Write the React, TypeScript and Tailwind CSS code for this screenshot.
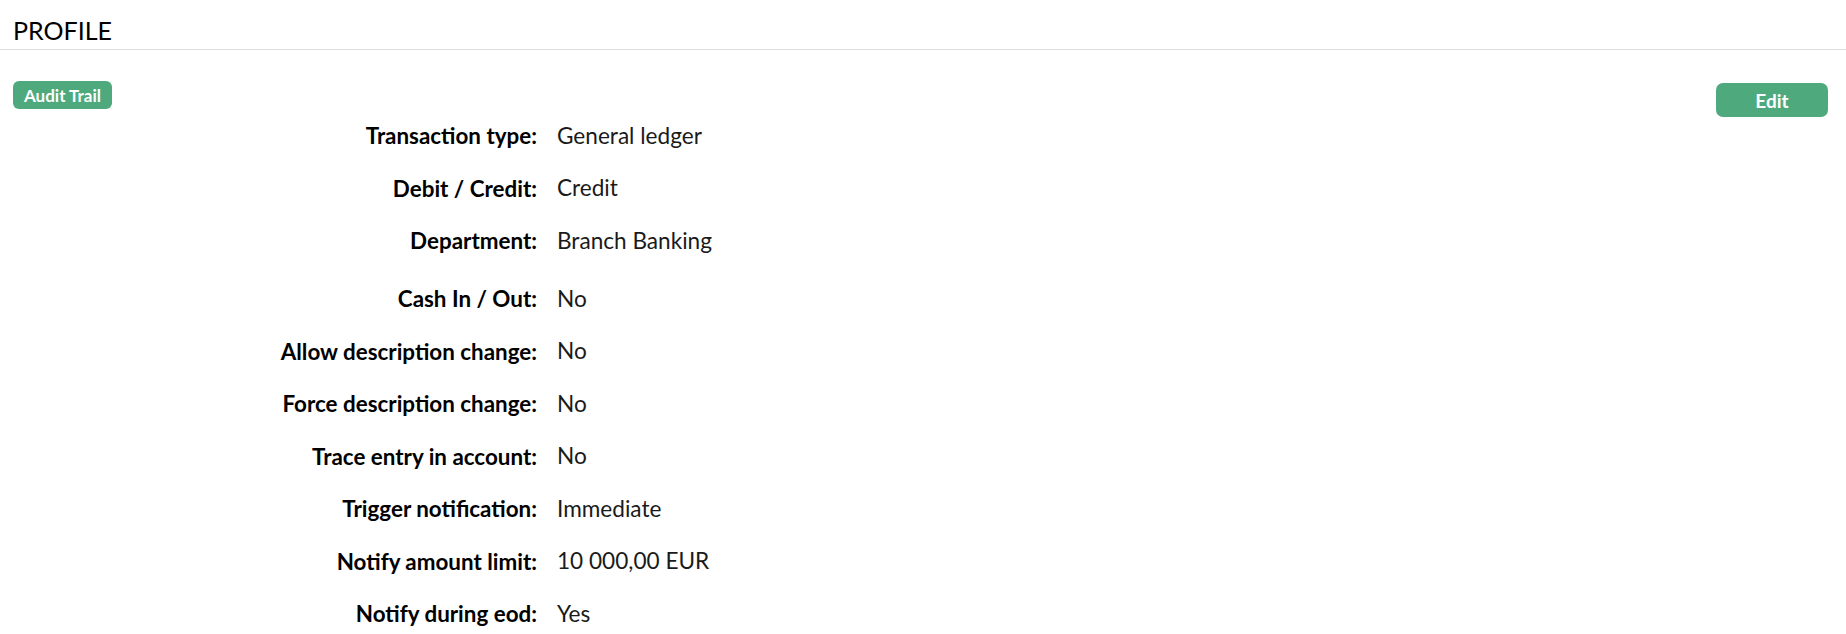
import React from 'react'

const rows: { label: string; value: string; extra?: boolean }[] = [
  { label: 'Transaction type:', value: 'General ledger' },
  { label: 'Debit / Credit:', value: 'Credit' },
  { label: 'Department:', value: 'Branch Banking', extra: true },
  { label: 'Cash In / Out:', value: 'No' },
  { label: 'Allow description change:', value: 'No' },
  { label: 'Force description change:', value: 'No' },
  { label: 'Trace entry in account:', value: 'No' },
  { label: 'Trigger notification:', value: 'Immediate' },
  { label: 'Notify amount limit:', value: '10 000,00 EUR' },
  { label: 'Notify during eod:', value: 'Yes' },
]

export default function App() {
  return (
    <div className="min-h-screen bg-white text-[#111] font-['Lato',_'Noto_Sans',_sans-serif]">
      {/* ── Header ── */}
      <div className="h-[50px] border-b border-[#dcdcdc] flex items-end pl-[13px] pb-[6px]">
        <h1 className="text-[25px] font-normal leading-none text-black">PROFILE</h1>
      </div>

      {/* ── Actions ── */}
      <div className="flex justify-between items-start h-[28px] mt-[31px] pl-[13px] pr-[18px]">
        <button className="h-[28px] rounded-[6px] bg-[#4ea97c] px-[11px] text-[17px] font-bold text-white leading-none">
          Audit Trail
        </button>
        <button className="mt-[2px] h-[34px] w-[112px] rounded-[7px] bg-[#4ea97c] text-[19px] font-bold text-white leading-none">
          Edit
        </button>
      </div>

      {/* ── Details ── */}
      <div className="flex flex-col mt-[1px]">
        {rows.map((r) => (
          <div
            key={r.label}
            className={`flex items-center h-[52.5px] ${r.extra ? 'mb-[5.5px]' : ''}`}
          >
            <div className="w-[537px] shrink-0 text-right text-[22.4px] font-bold leading-none text-black">{r.label}</div>
            <div className="pl-[20px] text-[22.6px] leading-none text-[#1a1a1a]">{r.value}</div>
          </div>
        ))}
      </div>
    </div>
  )
}
